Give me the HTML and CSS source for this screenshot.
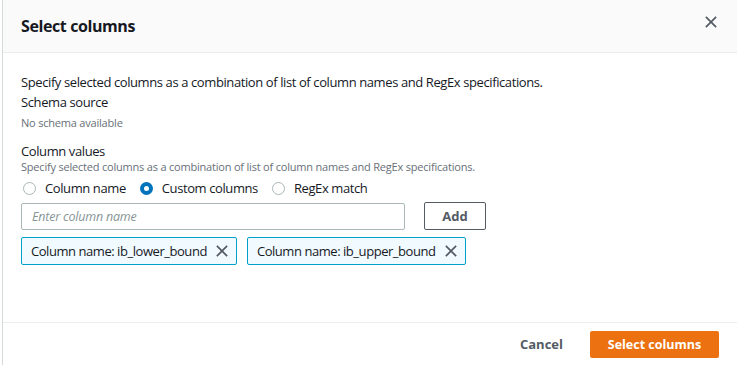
FILE: index.html
```html
<!DOCTYPE html>
<html lang="en">
<head>
    <meta charset="UTF-8">
    <title>Select columns</title>
    <link rel="stylesheet" href="styles.css">
</head>
<body>
    <div class="modal">
        <div class="modal-header">
            <h2>Select columns</h2>
            <button class="close-btn" aria-label="Close">
                <svg width="14" height="14" viewBox="0 0 14 14"><path d="M1 1 L13 13 M13 1 L1 13" stroke="#545b64" stroke-width="2" fill="none"/></svg>
            </button>
        </div>
        <div class="modal-body">
            <p class="intro">Specify selected columns as a combination of list of column names and RegEx specifications.</p>
            <div class="field">
                <div class="label">Schema source</div>
                <div class="hint">No schema available</div>
            </div>
            <div class="field values">
                <div class="label">Column values</div>
                <div class="hint">Specify selected columns as a combination of list of column names and RegEx specifications.</div>
                <div class="radio-row">
                    <label class="radio"><span class="dot"></span>Column name</label>
                    <label class="radio"><span class="dot checked"></span>Custom columns</label>
                    <label class="radio"><span class="dot"></span>RegEx match</label>
                </div>
                <div class="add-row">
                    <input type="text" placeholder="Enter column name">
                    <button class="add-btn">Add</button>
                </div>
                <div class="tokens">
                    <div class="token">Column name: ib_lower_bound
                        <svg width="14" height="14" viewBox="0 0 14 14"><path d="M1 1 L13 13 M13 1 L1 13" stroke="#545b64" stroke-width="2" fill="none"/></svg>
                    </div>
                    <div class="token">Column name: ib_upper_bound
                        <svg width="14" height="14" viewBox="0 0 14 14"><path d="M1 1 L13 13 M13 1 L1 13" stroke="#545b64" stroke-width="2" fill="none"/></svg>
                    </div>
                </div>
            </div>
        </div>
        <div class="modal-footer">
            <button class="link-btn">Cancel</button>
            <button class="primary-btn">Select columns</button>
        </div>
    </div>
</body>
</html>
```

FILE: styles.css
```css
body {
    margin: 0;
    font-family: 'Open Sans', 'Noto Sans', sans-serif;
    color: #16191f;
    background-color: #ffffff;
}
.modal {
    margin-left: 2px;
    border-left: 1px solid #d5dbdb;
    height: 365px;
    display: flex;
    flex-direction: column;
    background-color: #ffffff;
}
.modal-header {
    height: 52px;
    background-color: #fafafa;
    border-bottom: 1px solid #eaeded;
    display: flex;
    align-items: center;
    justify-content: space-between;
    padding: 0 20px 0 18px;
}
h2 {
    margin: 0;
    font-size: 16px;
    font-weight: 700;
    letter-spacing: -0.4px;
}
.close-btn {
    background: none;
    border: none;
    padding: 0;
    margin-top: -8px;
    cursor: pointer;
}
.close-btn svg {
    width: 12px;
    height: 12px;
    display: block;
}
.modal-body {
    flex: 1;
    padding: 19px 18px 0;
}
.intro {
    margin: 0;
    font-size: 13px;
    line-height: 20px;
    letter-spacing: -0.4px;
}
.label {
    font-size: 13px;
    line-height: 20px;
    letter-spacing: -0.4px;
}
.hint {
    margin-top: 2px;
    font-size: 11px;
    line-height: 18px;
    color: #687078;
    letter-spacing: -0.2px;
}
.field.values {
    margin-top: 11px;
}
.values .label {
    line-height: 17px;
}
.values .hint {
    margin-top: 0;
    line-height: 14px;
}
.radio-row {
    display: flex;
    gap: 12px;
    margin-top: 3px;
    height: 22px;
    align-items: center;
}
.radio {
    display: flex;
    align-items: center;
    font-size: 13px;
    letter-spacing: -0.4px;
}
.dot {
    width: 13px;
    height: 13px;
    border: 1px solid #aab7b8;
    border-radius: 50%;
    margin: 0 9px 0 2px;
    box-sizing: border-box;
}
.dot.checked {
    border: 4px solid #0073bb;
}
.add-row {
    display: flex;
    gap: 19px;
    margin-top: 4px;
}
.add-row input {
    width: 384px;
    height: 27px;
    box-sizing: border-box;
    border: 1px solid #aab7b8;
    border-radius: 2px;
    padding: 0 10px;
    font-family: inherit;
    font-size: 12.5px;
    letter-spacing: -0.2px;
}
.add-row input::placeholder {
    color: #879596;
    font-style: italic;
}
.add-btn {
    width: 62px;
    height: 28px;
    margin-top: -1px;
    border: 1px solid #545b64;
    border-radius: 2px;
    background-color: #ffffff;
    color: #545b64;
    font-family: inherit;
    font-weight: 700;
    font-size: 13px;
}
.tokens {
    display: flex;
    gap: 10px;
    margin-top: 7px;
}
.token {
    display: flex;
    align-items: center;
    gap: 9px;
    height: 28px;
    box-sizing: border-box;
    padding: 0 8px 0 9px;
    border: 1px solid #00a1c9;
    border-radius: 2px;
    background-color: #f1faff;
    font-size: 13px;
    letter-spacing: -0.45px;
}
.token svg {
    width: 12px;
    height: 12px;
}
.modal-footer {
    height: 42px;
    border-top: 1px solid #eaeded;
    display: flex;
    align-items: center;
    justify-content: flex-end;
    gap: 12px;
    padding-right: 18px;
}
.link-btn {
    background: none;
    border: none;
    padding: 0 15px;
    font-family: inherit;
    font-weight: 700;
    font-size: 13px;
    color: #545b64;
}
.primary-btn {
    width: 129px;
    height: 27px;
    border: none;
    border-radius: 2px;
    background-color: #ec7211;
    color: #ffffff;
    font-family: inherit;
    font-weight: 700;
    font-size: 12.5px;
}
```
